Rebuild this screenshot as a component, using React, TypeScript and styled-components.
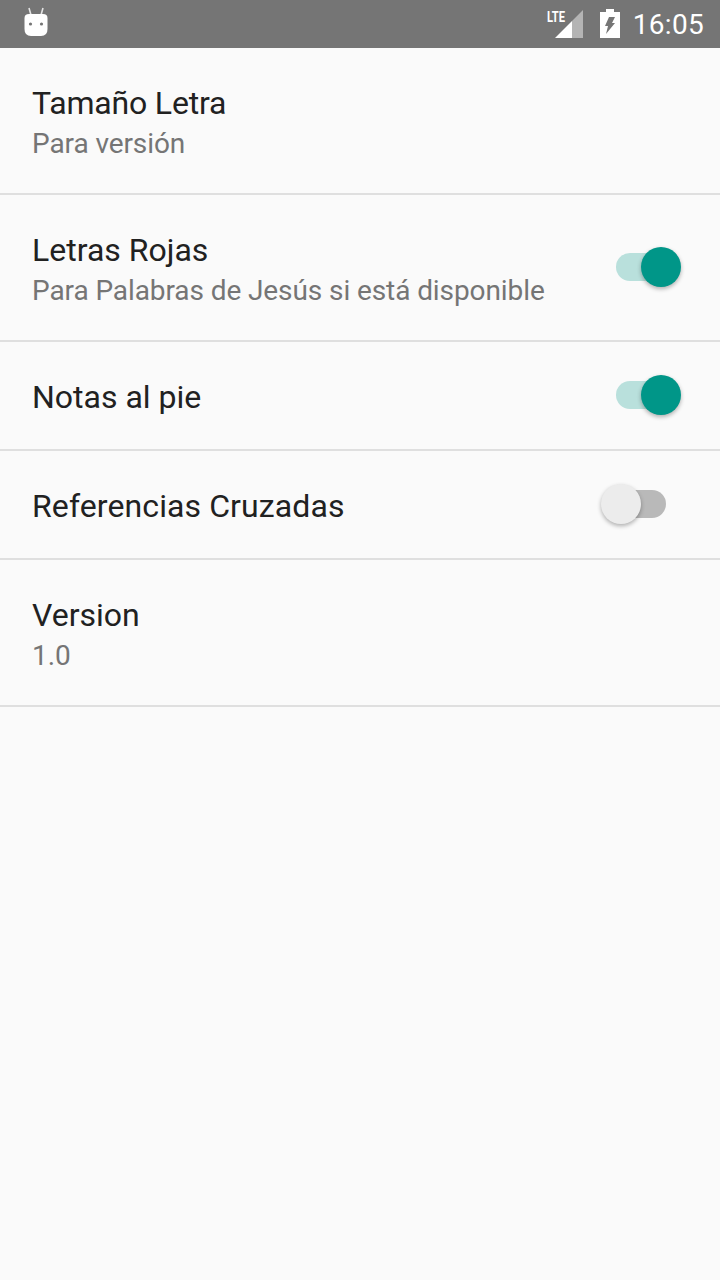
import React from "react";
import styled, { createGlobalStyle } from "styled-components";

const GlobalStyle = createGlobalStyle`
  html, body {
    margin: 0;
    padding: 0;
    background: #fafafa;
  }
  body {
    font-family: Roboto, "Noto Sans", sans-serif;
  }
`;

const Screen = styled.div`
  width: 720px;
  height: 1280px;
  background: #fafafa;
  overflow: hidden;
`;

const StatusBar = styled.div`
  height: 48px;
  background: #757575;
  display: flex;
  align-items: center;
  padding: 0 16px 0 24px;
  color: #fff;
`;

const StatusRight = styled.div`
  margin-left: auto;
  display: flex;
  align-items: center;
`;

const Clock = styled.span`
  font-size: 28px;
  line-height: 48px;
  margin: 2px 0 0 13px;
  letter-spacing: 0.3px;
`;

const Row = styled.div<{ $height: number }>`
  box-sizing: border-box;
  height: ${(p) => p.$height}px;
  border-bottom: 2px solid #dfdfdf;
  padding: 0 32px;
  display: flex;
  align-items: center;
  justify-content: space-between;
`;

const Texts = styled.div<{ $sub?: boolean }>`
  display: flex;
  flex-direction: column;
  padding-top: ${(p) => (p.$sub ? 4 : 2)}px;
`;

const Title = styled.div<{ $tracking?: number }>`
  font-size: 32px;
  line-height: 42px;
  color: #212121;
  letter-spacing: ${(p) => p.$tracking ?? 0}px;
`;

const Subtitle = styled.div`
  font-size: 28px;
  line-height: 40px;
  color: #757575;
  letter-spacing: -0.09px;
`;

const Track = styled.div<{ $on: boolean }>`
  position: relative;
  width: 68px;
  height: 28px;
  margin: -2px 4px 0 0;
  flex: none;
  &::before {
    content: "";
    position: absolute;
    left: 0;
    top: 0;
    width: 50px;
    height: 28px;
    border-radius: 14px;
    background: ${(p) => (p.$on ? "#b9e0dc" : "#b9b9b9")};
  }
`;

const Thumb = styled.div<{ $on: boolean }>`
  position: absolute;
  top: -6px;
  left: ${(p) => (p.$on ? "25px" : "-15px")};
  width: 40px;
  height: 40px;
  border-radius: 50%;
  background: ${(p) => (p.$on ? "#009688" : "#ececec")};
  box-shadow: 0 2px 4px rgba(0, 0, 0, 0.3);
`;

const IconSvg = styled.svg<{ $left?: number; $bottom?: number }>`
  flex: none;
  overflow: visible;
  margin-left: ${(p) => p.$left ?? 0}px;
  margin-bottom: ${(p) => p.$bottom ?? 0}px;
`;

const Switch = ({ on }: { on: boolean }) => (
  <Track $on={on}>
    <Thumb $on={on} />
  </Track>
);

const AndroidIcon = () => (
  <IconSvg width="24" height="29" viewBox="0 0 24 29" $bottom={3}>
    <path d="M5 0 L7 7 M19 0 L17 7" stroke="#e4e4e4" strokeWidth="1.6" fill="none" />
    <path
      d="M5 6 H19 Q23.500 6 23.500 10 V21 Q23.500 28 17 28 H7 Q0.500 28 0.500 21 V10 Q0.500 6 5 6 Z"
      fill="#fff"
    />
    <circle cx="6.500" cy="16" r="1.600" fill="#757575" />
    <circle cx="17.500" cy="16" r="1.600" fill="#757575" />
  </IconSvg>
);

const SignalIcon = () => (
  <IconSvg width="36" height="28" viewBox="0 0 36 28">
    <path d="M36 0 V28 H25 V11 Z" fill="#b4b4b4" />
    <path d="M25 11 V28 H8 Z" fill="#fff" />
    <text
      x="0"
      y="12"
      fontFamily="Roboto, sans-serif"
      fontSize="15.500"
      fontWeight="700"
      fill="#fff"
      textLength="18"
      lengthAdjust="spacingAndGlyphs"
    >
      LTE
    </text>
  </IconSvg>
);

const BatteryIcon = () => (
  <IconSvg width="20" height="29" viewBox="0 0 20 29" $left={17} $bottom={1}>
    <path d="M6 0 H14 V3 H20 V29 H0 V3 H6 Z" fill="#fff" />
    <path d="M9 8 H15 L12 14 H15 L6 25 L8 17 H5 Z" fill="#757575" />
  </IconSvg>
);

export default function App() {
  return (
    <Screen>
      <GlobalStyle />
      <StatusBar>
        <AndroidIcon />
        <StatusRight>
          <SignalIcon />
          <BatteryIcon />
          <Clock>16:05</Clock>
        </StatusRight>
      </StatusBar>
      <Row $height={147}>
        <Texts $sub>
          <Title $tracking={-0.17}>Tamaño Letra</Title>
          <Subtitle>Para versión</Subtitle>
        </Texts>
      </Row>
      <Row $height={147}>
        <Texts $sub>
          <Title>Letras Rojas</Title>
          <Subtitle>Para Palabras de Jesús si está disponible</Subtitle>
        </Texts>
        <Switch on />
      </Row>
      <Row $height={109}>
        <Texts>
          <Title>Notas al pie</Title>
        </Texts>
        <Switch on />
      </Row>
      <Row $height={109}>
        <Texts>
          <Title $tracking={0.1}>Referencias Cruzadas</Title>
        </Texts>
        <Switch on={false} />
      </Row>
      <Row $height={147}>
        <Texts $sub>
          <Title>Version</Title>
          <Subtitle>1.0</Subtitle>
        </Texts>
      </Row>
    </Screen>
  );
}
